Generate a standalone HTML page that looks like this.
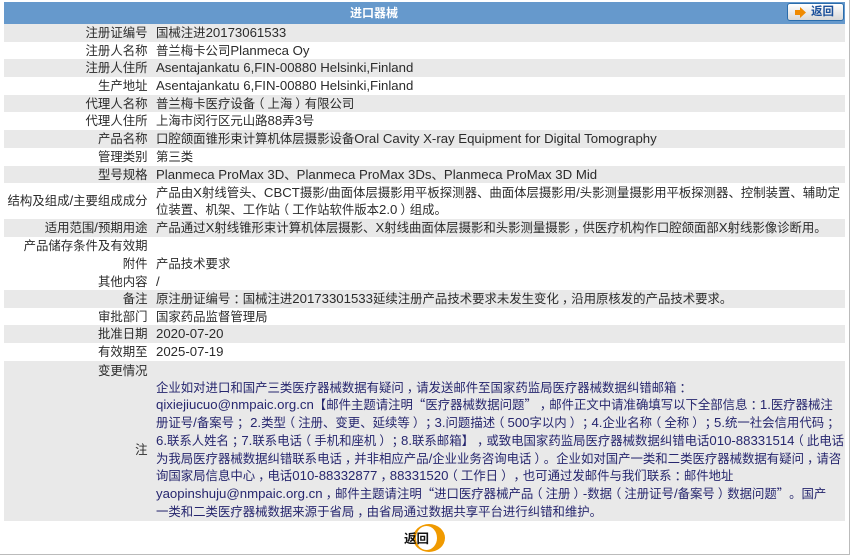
<!DOCTYPE html>
<html lang="zh">
<head>
<meta charset="utf-8">
<style>
html,body{margin:0;padding:0;background:#fff}
#p{position:relative;width:850px;height:557px;overflow:hidden;background:#fff;font-family:"Liberation Sans","Noto Sans CJK SC",sans-serif;font-size:12.4px;color:#2b2b2b;text-spacing-trim:space-all}
.r{position:absolute;left:4px;width:840.5px}
.g{background:#e9e9e9}
.l,.v{position:absolute;white-space:nowrap;line-height:17.75px}
.l{right:697px;text-align:right;top:1px}
.v{left:152px;top:1px}
.v>div{height:17.75px}
.n{color:#26266e}
i{font-style:normal;font-size:13.2px;line-height:0}
s{text-decoration:none;display:inline-block;width:1em;text-align:center;font-feature-settings:"halt";font-family:"Noto Sans CJK SC",sans-serif;line-height:0}
em{font-style:normal;display:inline-block;width:1em;font-feature-settings:"halt";font-family:"Noto Sans CJK SC",sans-serif;line-height:0;text-align:left}
em.o{text-align:right}
</style>
</head>
<body>
<div id="p">
<div style="position:absolute;right:0;top:0;width:1px;height:555px;background:#bbb"></div>
<div style="position:absolute;left:0;top:554px;width:850px;height:1px;background:#bbb"></div>
<div style="position:absolute;left:4px;top:2px;width:840.5px;height:22px;background:#6699cc"></div>
<div style="position:absolute;left:350px;top:4px;color:#fff;font-weight:bold;font-size:12px;line-height:18px">进口器械</div>
<div style="position:absolute;left:787px;top:3px;width:54.5px;height:15.5px;border:1.5px solid #2a6cab;border-radius:3px;background:linear-gradient(#fff,#d8d8d8)">
<svg style="position:absolute;left:7px;top:3px" width="11" height="11" viewBox="0 0 11 11"><path d="M0 3H5V0L11 5.5L5 11V8H0Z" fill="#f08a00"/></svg>
<span style="position:absolute;left:23px;top:1px;font-size:11.5px;font-weight:bold;color:#1a4f9a;line-height:15px;white-space:nowrap">返回</span>
</div>

<div class="r g" style="top:24px;height:17.7px"><div class="l">注册证编号</div><div class="v">国械注进<i>20173061533</i></div></div>
<div class="r" style="top:41.7px;height:17.7px"><div class="l">注册人名称</div><div class="v">普兰梅卡公司<i>Planmeca Oy</i></div></div>
<div class="r g" style="top:59.4px;height:17.7px"><div class="l">注册人住所</div><div class="v"><i>Asentajankatu 6,FIN-00880 Helsinki,Finland</i></div></div>
<div class="r" style="top:77.1px;height:17.7px"><div class="l">生产地址</div><div class="v"><i>Asentajankatu 6,FIN-00880 Helsinki,Finland</i></div></div>
<div class="r g" style="top:94.6px;height:17.8px"><div class="l">代理人名称</div><div class="v">普兰梅卡医疗设备<s>（</s>上海<s>）</s>有限公司</div></div>
<div class="r" style="top:112.4px;height:17.7px"><div class="l">代理人住所</div><div class="v">上海市闵行区元山路<i>88</i>弄<i>3</i>号</div></div>
<div class="r g" style="top:130.3px;height:17.8px"><div class="l">产品名称</div><div class="v">口腔颌面锥形束计算机体层摄影设备<i>Oral Cavity X-ray Equipment for Digital Tomography</i></div></div>
<div class="r" style="top:148px;height:17.7px"><div class="l">管理类别</div><div class="v">第三类</div></div>
<div class="r g" style="top:165.8px;height:17.7px"><div class="l">型号规格</div><div class="v"><i>Planmeca ProMax 3D</i>、<i>Planmeca ProMax 3Ds</i>、<i>Planmeca ProMax 3D Mid</i></div></div>
<div class="r" style="top:183.5px;height:35.5px"><div class="l" style="top:9px">结构及组成<i>/</i>主要组成成分</div><div class="v"><div>产品由<i>X</i>射线管头、<i>CBCT</i>摄影<i>/</i>曲面体层摄影用平板探测器、曲面体层摄影用<i>/</i>头影测量摄影用平板探测器、控制装置、辅助定</div><div>位装置、机架、工作站<s>（</s>工作站软件版本<i>2.0</i><s>）</s>组成。</div></div></div>
<div class="r g" style="top:219px;height:17.8px"><div class="l">适用范围<i>/</i>预期用途</div><div class="v">产品通过<i>X</i>射线锥形束计算机体层摄影、<i>X</i>射线曲面体层摄影和头影测量摄影<s>，</s>供医疗机构作口腔颌面部<i>X</i>射线影像诊断用。</div></div>
<div class="r" style="top:236.8px;height:17.7px"><div class="l">产品储存条件及有效期</div></div>
<div class="r" style="top:254.5px;height:17.7px"><div class="l">附件</div><div class="v">产品技术要求</div></div>
<div class="r" style="top:272.2px;height:17.7px"><div class="l" style="top:1.5px">其他内容</div><div class="v" style="top:1.5px"><i>/</i></div></div>
<div class="r g" style="top:290px;height:17.8px"><div class="l">备注</div><div class="v">原注册证编号<s>：</s>国械注进<i>20173301533</i>延续注册产品技术要求未发生变化<s>，</s>沿用原核发的产品技术要求。</div></div>
<div class="r" style="top:307.8px;height:17.7px"><div class="l">审批部门</div><div class="v">国家药品监督管理局</div></div>
<div class="r g" style="top:325.4px;height:17.8px"><div class="l">批准日期</div><div class="v"><i>2020-07-20</i></div></div>
<div class="r" style="top:343.2px;height:17.8px"><div class="l">有效期至</div><div class="v"><i>2025-07-19</i></div></div>
<div class="r g" style="top:361px;height:160px">
<div class="l" style="top:1.5px">变更情况</div>
<div class="l" style="top:81px">注</div>
<div class="v n" style="top:18.5px">
<div>企业如对进口和国产三类医疗器械数据有疑问<s>，</s>请发送邮件至国家药监局医疗器械数据纠错邮箱<s>：</s></div>
<div><i>qixiejiucuo@nmpaic.org.cn</i><em class="o">【</em>邮件主题请注明<em class="o">“</em>医疗器械数据问题<em>”</em><s>，</s>邮件正文中请准确填写以下全部信息<s>：</s><i>1.</i>医疗器械注</div>
<div>册证号<i>/</i>备案号<s>；</s><i> 2.</i>类型<s>（</s>注册、变更、延续等<s>）</s><s>；</s><i>3.</i>问题描述<s>（</s><i>500</i>字以内<s>）</s><s>；</s><i>4.</i>企业名称<s>（</s>全称<s>）</s><s>；</s><i>5.</i>统一社会信用代码<s>；</s></div>
<div><i>6.</i>联系人姓名<s>；</s><i>7.</i>联系电话<s>（</s>手机和座机<s>）</s><s>；</s><i>8.</i>联系邮箱<em>】</em><s>，</s>或致电国家药监局医疗器械数据纠错电话<i>010-88331514</i><s>（</s>此电话</div>
<div>为我局医疗器械数据纠错联系电话<s>，</s>并非相应产品<i>/</i>企业业务咨询电话<s>）</s>。企业如对国产一类和二类医疗器械数据有疑问<s>，</s>请咨</div>
<div>询国家局信息中心<s>，</s>电话<i>010-88332877</i><s>，</s><i>88331520</i><s>（</s>工作日<s>）</s><s>，</s>也可通过发邮件与我们联系<s>：</s>邮件地址</div>
<div><i>yaopinshuju@nmpaic.org.cn</i><s>，</s>邮件主题请注明<em class="o">“</em>进口医疗器械产品<s>（</s>注册<s>）</s><i>-</i>数据<s>（</s>注册证号<i>/</i>备案号<s>）</s>数据问题<em>”</em>。国产</div>
<div>一类和二类医疗器械数据来源于省局<s>，</s>由省局通过数据共享平台进行纠错和维护。</div>
</div>
</div>

<svg style="position:absolute;left:412px;top:523px" width="34" height="30" viewBox="0 0 34 30"><ellipse cx="17" cy="15" rx="16" ry="14" fill="#f09a00"/><ellipse cx="14.5" cy="15" rx="10.5" ry="12" fill="#fff"/></svg>
<div style="position:absolute;left:404px;top:530px;font-weight:bold;font-size:12.5px;line-height:18px;color:#111;white-space:nowrap">返回</div>
</div>
</body>
</html>
